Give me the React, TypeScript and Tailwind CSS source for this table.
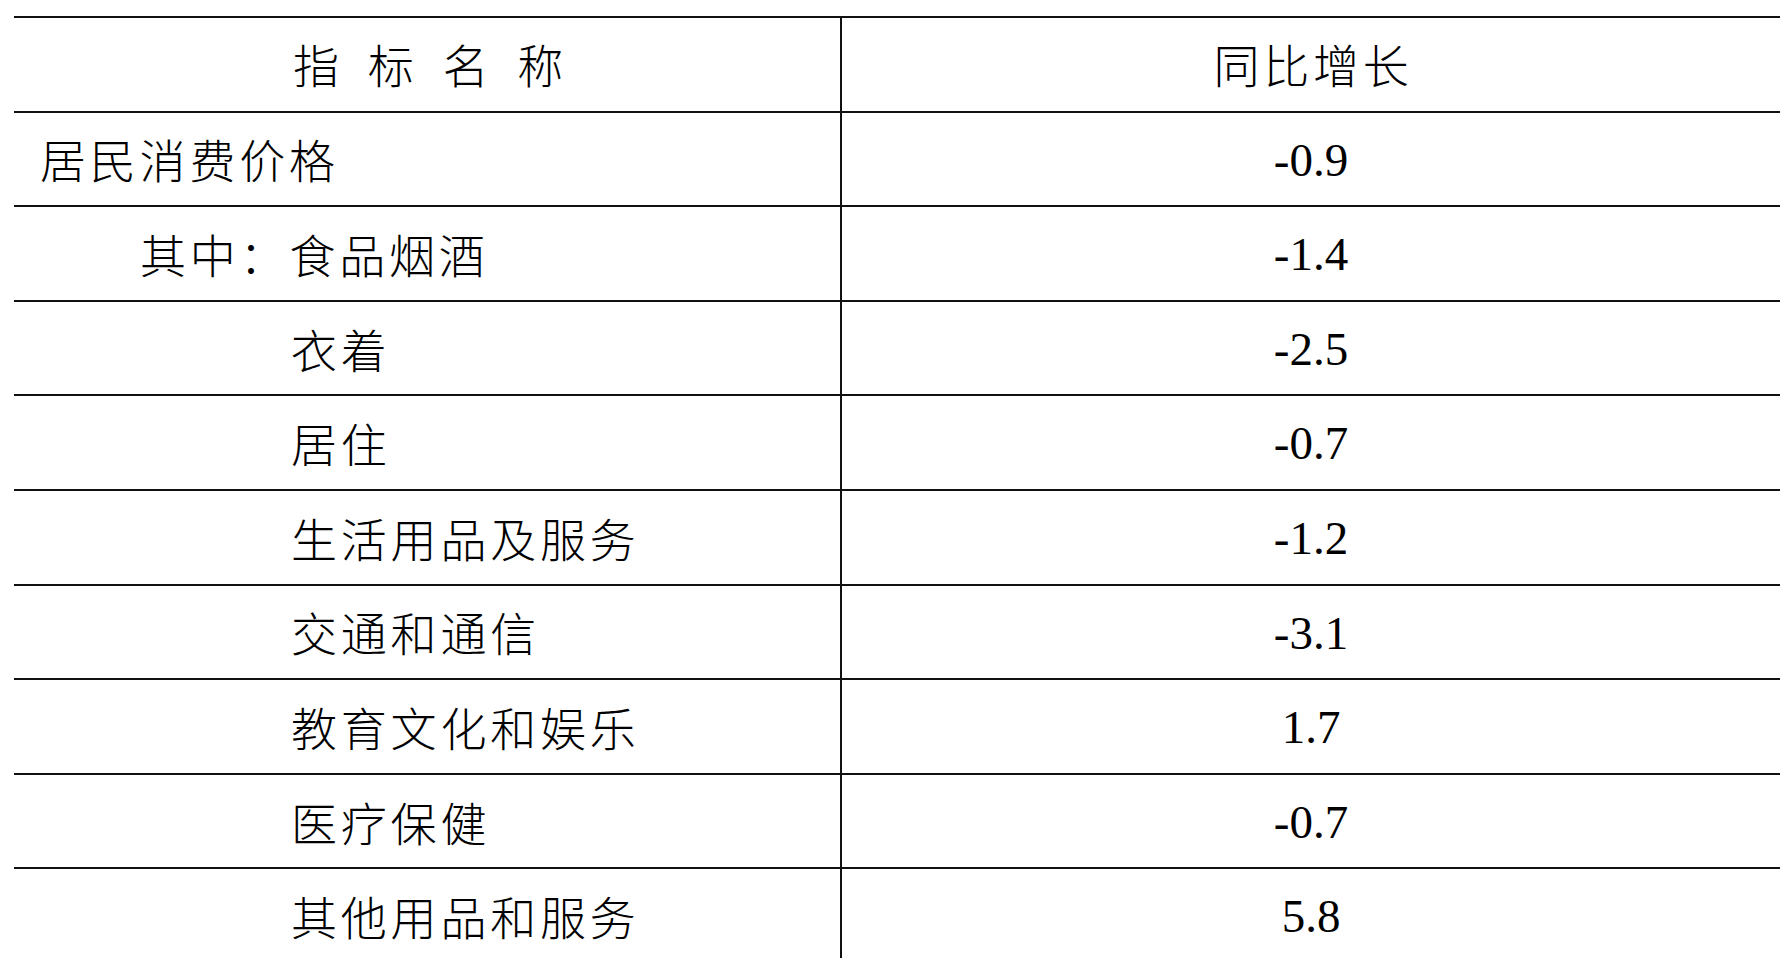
const rows = [
  { name: "居民消费价格", value: "-0.9", indent: "pl-[26px]" },
  { name: "其中：食品烟酒", value: "-1.4", indent: "pl-[126px]" },
  { name: "衣着", value: "-2.5", indent: "pl-[277px]" },
  { name: "居住", value: "-0.7", indent: "pl-[277px]" },
  { name: "生活用品及服务", value: "-1.2", indent: "pl-[277px]" },
  { name: "交通和通信", value: "-3.1", indent: "pl-[277px]" },
  { name: "教育文化和娱乐", value: "1.7", indent: "pl-[277px]" },
  { name: "医疗保健", value: "-0.7", indent: "pl-[277px]" },
  { name: "其他用品和服务", value: "5.8", indent: "pl-[277px]" },
];

const cjk = "font-['Noto_Sans_CJK_SC',sans-serif]";

export default function App() {
  return (
    <div className="h-[958px] w-full overflow-hidden bg-white text-black">
      <div className="ml-[14px] mt-[16px] w-[1766px]">
        {/* header */}
        <div className="grid h-[94.6px] grid-cols-[826px_1fr] border-t-2 border-[#111]">
          <div className={`flex items-center justify-center pb-[2px] pl-[6px] text-[46px] font-light tracking-[3.8px] [word-spacing:11px] ${cjk}`}>
            指 标 名 称
          </div>
          <div className={`flex items-center justify-center border-l-2 border-[#111] pb-[2px] pl-[4px] text-[46px] font-light tracking-[3.8px] ${cjk}`}>
            同比增长
          </div>
        </div>

        {rows.map((row, i) => (
          <div
            key={i}
            className="grid h-[94.6px] grid-cols-[826px_1fr] border-t-2 border-[#111]"
          >
            <div className={`flex items-center text-[46px] font-light tracking-[3.8px] ${row.indent} ${cjk}`}>
              {row.name}
            </div>
            <div className="flex items-center justify-center border-l-2 border-[#111] pt-[2px] font-['Liberation_Serif',serif] text-[47px]">
              {row.value}
            </div>
          </div>
        ))}
        <div className="border-t-2 border-[#111]" />
      </div>
    </div>
  );
}
